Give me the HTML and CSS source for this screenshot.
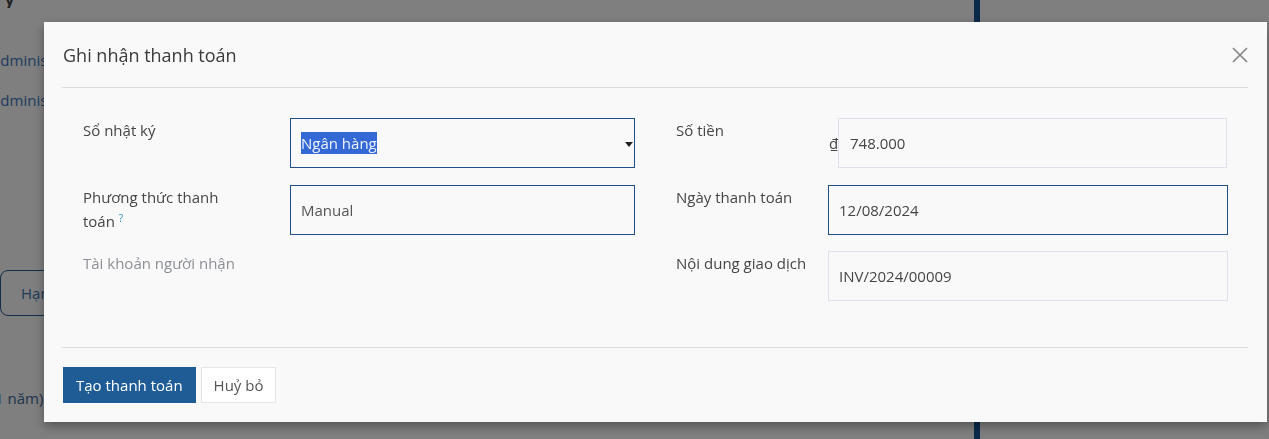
FILE: index.html
```html
<!DOCTYPE html>
<html lang="vi">
<head>
<meta charset="utf-8">
<title>Ghi nhận thanh toán</title>
<link rel="stylesheet" href="styles.css">
</head>
<body>
<div class="page">
  <main class="main">
    <div class="crumb"><span class="crumb-text">y</span></div>
    <div class="meta">administrator</div>
    <div class="meta meta-2">administrator</div>
    <div class="bg-btn">Hạn thanh toán</div>
    <div class="term">1 năm)</div>
  </main>
  <aside class="chatter"></aside>
</div>
<div class="backdrop"></div>
<div class="modal" role="dialog">
  <header class="modal-header">
    <h4 class="modal-title">Ghi nhận thanh toán</h4>
    <button class="close" aria-label="Close">
      <svg width="16" height="16" viewBox="0 0 16 16"><path d="M1 1 L15 15 M15 1 L1 15" stroke="#808080" stroke-width="1.5" fill="none"/></svg>
    </button>
  </header>
  <div class="modal-body">
    <div class="group group-left">
      <div class="row">
        <label class="lbl"><span class="lbl-text">Sổ nhật ký</span></label>
        <div class="input focus"><span class="sel">Ngân hàng</span><span class="caret"></span></div>
      </div>
      <div class="row row-2">
        <label class="lbl"><span class="lbl-text">Phương thức thanh toán <sup class="help">?</sup></span></label>
        <div class="input focus"><span class="val-muted">Manual</span></div>
      </div>
      <div class="row">
        <label class="lbl lbl-muted"><span class="lbl-text lbl-wide">Tài khoản người nhận</span></label>
        <div></div>
      </div>
    </div>
    <div class="group group-right">
      <div class="row">
        <label class="lbl"><span class="lbl-text">Số tiền</span></label>
        <div class="amount"><span class="cur">₫</span><div class="input plain amount-box">748.000</div></div>
      </div>
      <div class="row row-2">
        <label class="lbl"><span class="lbl-text">Ngày thanh toán</span></label>
        <div class="input focus">12/08/2024</div>
      </div>
      <div class="row">
        <label class="lbl"><span class="lbl-text">Nội dung giao dịch</span></label>
        <div class="input plain">INV/2024/00009</div>
      </div>
    </div>
  </div>
  <footer class="modal-footer">
    <button class="btn btn-primary">Tạo thanh toán</button>
    <button class="btn btn-secondary">Huỷ bỏ</button>
  </footer>
</div>
</body>
</html>
```
FILE: styles.css
```css
* { box-sizing: border-box; }
html, body { margin: 0; padding: 0; }
body {
  font-family: "Open Sans", "Noto Sans", "DejaVu Sans", sans-serif;
  background: #ffffff;
  overflow: hidden;
  width: 1269px;
  height: 439px;
}

/* page behind the dialog */
.page { display: flex; height: 439px; }
.main { width: 974px; overflow: hidden; color: #3c78be; font-size: 15px; }
.chatter { width: 295px; border-left: 6px solid #155596; }
.crumb { height: 8px; overflow: hidden; padding-left: 2px; }
.crumb-text { display: block; font-size: 30px; line-height: 30px; margin-top: -21px; color: #444; }
.meta { margin-top: 42px; line-height: 20px; margin-left: -8px; }
.meta-2 { margin-top: 20px; }
.bg-btn {
  margin-top: 160px; height: 46px; width: 200px;
  border: 1px solid #2a5a92; border-radius: 8px;
  display: flex; align-items: center; padding-left: 20px;
  color: #3c74b4;
}
.term { margin-top: 72px; margin-left: -5px; line-height: 20px; color: #41699c; }

.backdrop { position: fixed; inset: 0; background: rgba(0, 0, 0, 0.5); }

/* dialog */
.modal {
  position: fixed; left: 44px; top: 22px; width: 1223px; height: 400px;
  background: #f9f9f9;
  box-shadow: 0 4px 10px rgba(0, 0, 0, 0.35);
  display: flex; flex-direction: column;
  padding: 0 19px 0 18px;
}
.modal-header {
  height: 66px; flex: none; border-bottom: 1px solid #dcdcdc;
  display: flex; align-items: center; justify-content: space-between;
}
.modal-title { margin: 0 0 0 1px; font-size: 18px; font-weight: 400; color: #3b3b3b; }
.close {
  border: 0; background: transparent; padding: 0; margin-right: 0;
  width: 16px; height: 16px; display: flex;
}

.modal-body {
  height: 260px; flex: none;
  display: grid; grid-template-columns: 552px 552px; column-gap: 41px;
  padding: 30px 20px 0 21px;
  border-bottom: 1px solid #dcdcdc;
  align-content: start;
}
.group { display: flex; flex-direction: column; }
.row { display: grid; height: 50px; }
.row + .row { margin-top: 16px; }
.row.row-2 { margin-top: 17px; }
.group-left .row { grid-template-columns: 207px 345px; }
.group-right .row { grid-template-columns: 152px 400px; }

.lbl { font-size: 15px; line-height: 24px; color: #454545; }
.lbl-text { display: block; max-width: 150px; }
.lbl-wide { max-width: 200px; }
.lbl-muted { color: #8c9096; }
.help { font-size: 10px; color: #2a8bb8; vertical-align: 5px; line-height: 0; }

.input {
  height: 50px; border: 1px solid #dfe0ea; padding: 0 10px;
  display: flex; align-items: center;
  font-size: 15px; color: #454545; position: relative;
}
.input.focus { border-color: #214f88; }
.sel { background: #3468d4; color: #eef3ff; line-height: 22px; }
.val-muted { color: #555; }
.caret {
  position: absolute; right: 1px; top: 23px;
  width: 0; height: 0;
  border-left: 4px solid transparent; border-right: 4px solid transparent;
  border-top: 5px solid #222;
}
.amount { display: flex; align-items: center; }
.cur { width: 9px; font-size: 15px; color: #454545; margin-left: 1px; }
.amount-box { flex: 1; margin-right: 1px; padding-left: 11px; }

.modal-footer { flex: none; display: flex; gap: 5px; padding: 19px 0 0 1px; }
.btn {
  height: 36px; padding: 0 12px; font-family: inherit; font-size: 15px;
  border: 1px solid transparent; cursor: pointer;
}
.btn-primary { background: #1f5c95; color: #ffffff; }
.btn-secondary { background: #ffffff; color: #555; border-color: #e6e6e6; }
```
